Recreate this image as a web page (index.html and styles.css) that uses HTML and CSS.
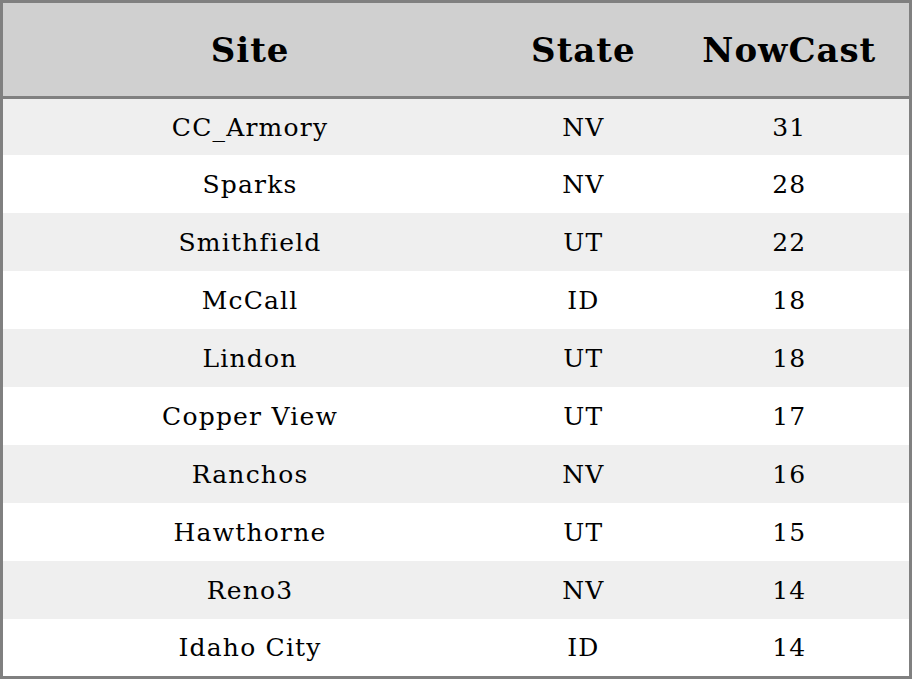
FILE: index.html
```html
<!DOCTYPE html>
<html>
<head>
<meta charset="utf-8">
<link rel="stylesheet" href="styles.css">
</head>
<body>
<table class="tbl">
  <colgroup>
    <col class="c-site">
    <col class="c-state">
    <col class="c-now">
  </colgroup>
  <thead>
    <tr><th>Site</th><th>State</th><th>NowCast</th></tr>
  </thead>
  <tbody>
    <tr><td>CC_Armory</td><td>NV</td><td>31</td></tr>
    <tr><td>Sparks</td><td>NV</td><td>28</td></tr>
    <tr><td>Smithfield</td><td>UT</td><td>22</td></tr>
    <tr><td>McCall</td><td>ID</td><td>18</td></tr>
    <tr><td>Lindon</td><td>UT</td><td>18</td></tr>
    <tr><td>Copper View</td><td>UT</td><td>17</td></tr>
    <tr><td>Ranchos</td><td>NV</td><td>16</td></tr>
    <tr><td>Hawthorne</td><td>UT</td><td>15</td></tr>
    <tr><td>Reno3</td><td>NV</td><td>14</td></tr>
    <tr><td>Idaho City</td><td>ID</td><td>14</td></tr>
  </tbody>
</table>
</body>
</html>
```
FILE: styles.css
```css
html, body {
  margin: 0;
  padding: 0;
  background: #ffffff;
}
.tbl {
  width: 912px;
  border-collapse: collapse;
  border: 3px solid #808080;
  font-family: "DejaVu Serif", serif;
  color: #000;
  table-layout: fixed;
}
.c-site { width: 494px; }
.c-state { width: 172px; }
.c-now { width: 240px; }
.tbl th {
  background: #d0d0d0;
  font-weight: bold;
  font-size: 34px;
  letter-spacing: 1px;
  height: 93px;
  padding: 0;
  text-align: center;
  border-bottom: 3px solid #808080;
}
.tbl td {
  font-size: 25px;
  letter-spacing: 1.2px;
  text-align: center;
  padding: 0;
  height: 58px;
}
.tbl tbody tr:first-child td { height: 56px; }
.tbl tbody tr:last-child td { height: 57px; }
.tbl tbody tr:nth-child(odd) { background: #efefef; }
.tbl tbody tr:nth-child(even) { background: #ffffff; }
```
